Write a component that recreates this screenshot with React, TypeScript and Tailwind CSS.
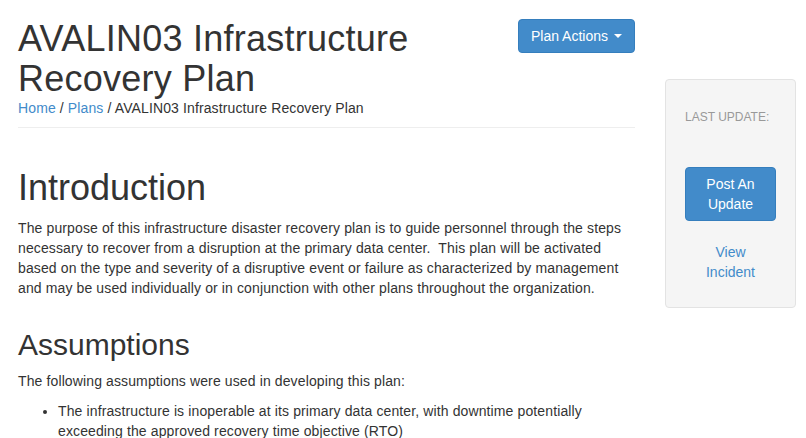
import React from 'react';

const App: React.FC = () => {
    return (
        <div className="flex min-h-screen gap-[30px] bg-white pl-[18px] text-[14px] leading-[20px] tracking-[0.12px] text-[#333] font-['Liberation_Sans',Arial,sans-serif]">
            <div className="w-[617px] shrink-0">
                {/* page header */}
                <div className="mt-[19px] border-b border-[#eee] pb-[9px]">
                    <div className="flex items-start justify-between">
                        <h1 className="w-[420px] text-[36px] leading-[39.6px] tracking-[0.25px] font-normal">
                            AVALIN03 Infrastructure Recovery Plan
                        </h1>
                        <button
                            type="button"
                            className="flex h-[34px] items-center rounded-[4px] border border-[#357ebd] bg-[#428bca] px-[12px] tracking-normal text-white"
                        >
                            Plan Actions
                            <span className="ml-[6px] inline-block h-0 w-0 border-x-[4px] border-t-[4px] border-x-transparent border-t-white" />
                        </button>
                    </div>
                    <div>
                        <a href="#" className="text-[#428bca]">Home</a> / <a href="#" className="text-[#428bca]">Plans</a> / AVALIN03 Infrastructure Recovery Plan
                    </div>
                </div>

                <h1 className="mt-[40px] mb-[10px] text-[36px] leading-[39.6px] tracking-normal font-normal">Introduction</h1>
                <p className="mb-[10px]">
                    The purpose of this infrastructure disaster recovery plan is to guide personnel through the steps necessary to recover from a disruption at the primary data center.{'\u00a0'} This plan will be activated based on the type and severity of a disruptive event or failure as characterized by management and may be used individually or in conjunction with other plans throughout the organization.
                </p>

                <h2 className="mt-[30px] mb-[10px] text-[30px] leading-[33px] tracking-normal font-normal">Assumptions</h2>
                <p className="mb-[10px]">The following assumptions were used in developing this plan:</p>
                <ul className="list-disc pl-[40px]">
                    <li>The infrastructure is inoperable at its primary data center, with downtime potentially exceeding the approved recovery time objective (RTO)</li>
                </ul>
            </div>

            {/* sidebar */}
            <div className="w-[131px] shrink-0 pt-[79px]">
                <div className="rounded-[4px] border border-[#e3e3e3] bg-[#f5f5f5] px-[19px] pt-[19px] pb-[25px]">
                    <h6 className="mt-[12px] text-[12px] leading-[13.2px] tracking-normal text-[#999] uppercase">Last Update:</h6>
                    <button
                        type="button"
                        className="mt-[43px] block w-full rounded-[4px] border border-[#357ebd] bg-[#428bca] px-[12px] py-[6px] text-center tracking-normal text-white"
                    >
                        Post An Update
                    </button>
                    <div className="mt-[21px] text-center tracking-normal">
                        <a href="#" className="text-[#428bca]">View<br />Incident</a>
                    </div>
                </div>
            </div>
        </div>
    );
};

export default App;
